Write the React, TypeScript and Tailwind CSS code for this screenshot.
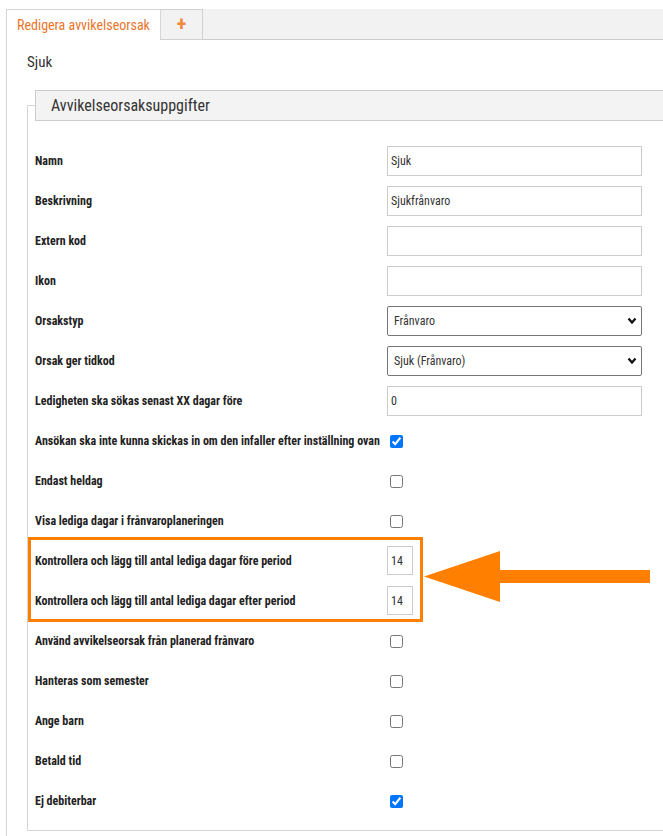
import React from 'react';

type Row =
    | { label: string; kind: 'text'; value?: string }
    | { label: string; kind: 'select'; value: string }
    | { label: string; kind: 'check'; checked?: boolean }
    | { label: string; kind: 'small'; value: string };

const topRows: Row[] = [
    { label: 'Namn', kind: 'text', value: 'Sjuk' },
    { label: 'Beskrivning', kind: 'text', value: 'Sjukfrånvaro' },
    { label: 'Extern kod', kind: 'text' },
    { label: 'Ikon', kind: 'text' },
    { label: 'Orsakstyp', kind: 'select', value: 'Frånvaro' },
    { label: 'Orsak ger tidkod', kind: 'select', value: 'Sjuk (Frånvaro)' },
    { label: 'Ledigheten ska sökas senast XX dagar före', kind: 'text', value: '0' },
    { label: 'Ansökan ska inte kunna skickas in om den infaller efter inställning ovan', kind: 'check', checked: true },
    { label: 'Endast heldag', kind: 'check' },
    { label: 'Visa lediga dagar i frånvaroplaneringen', kind: 'check' },
];

const highlightedRows: Row[] = [
    { label: 'Kontrollera och lägg till antal lediga dagar före period', kind: 'small', value: '14' },
    { label: 'Kontrollera och lägg till antal lediga dagar efter period', kind: 'small', value: '14' },
];

const bottomRows: Row[] = [
    { label: 'Använd avvikelseorsak från planerad frånvaro', kind: 'check' },
    { label: 'Hanteras som semester', kind: 'check' },
    { label: 'Ange barn', kind: 'check' },
    { label: 'Betald tid', kind: 'check' },
    { label: 'Ej debiterbar', kind: 'check', checked: true },
];

const condensed = {
    fontFamily: '"Roboto Condensed", "Liberation Sans Narrow", "DejaVu Sans Condensed", Roboto, sans-serif',
};

function Control({ row }: { row: Row }) {
    if (row.kind === 'text') {
        return (
            <input
                type="text"
                defaultValue={row.value ?? ''}
                style={condensed}
                className="h-[30px] w-[255px] border border-[#cccccc] bg-white px-[3px] text-[12px] text-[#333333] outline-none"
            />
        );
    }
    if (row.kind === 'select') {
        return (
            <div className="relative h-[30px] w-[255px]">
                <select
                    defaultValue={row.value}
                    style={condensed}
                    className="h-full w-full appearance-none rounded-[2px] border border-[#767676] bg-white pl-[6px] text-[12px] text-[#333333] outline-none"
                >
                    <option value={row.value}>{row.value}</option>
                </select>
                <svg className="pointer-events-none absolute right-[5px] top-[11px] h-[8px] w-[10px]" viewBox="0 0 10 8">
                    <path d="M1.5 1.5 L5 5.5 L8.5 1.5" fill="none" stroke="#111111" strokeWidth={2.2} />
                </svg>
            </div>
        );
    }
    if (row.kind === 'small') {
        return (
            <input
                type="text"
                defaultValue={row.value}
                style={condensed}
                className="h-[29px] w-[26px] border border-[#cccccc] bg-white px-[3px] text-[12px] text-[#333333] outline-none"
            />
        );
    }
    return (
        <input
            type="checkbox"
            defaultChecked={row.checked}
            className="m-0 ml-[3px] mt-[2px] h-[13px] w-[13px]"
        />
    );
}

function FormRow({ row }: { row: Row }) {
    return (
        <div className="flex h-[40px] items-center">
            <div className="w-[352px] shrink-0 text-[12px] font-bold text-[#222222]">{row.label}</div>
            <Control row={row} />
        </div>
    );
}

export default function App() {
    return (
        <div
            className="h-[836px] w-[663px] overflow-hidden bg-white pt-[9px] text-[#333333]"
            style={condensed}
        >
            <div className="ml-[6px] flex h-[31px]">
                <div className="flex w-[155px] items-center border-l border-r border-t border-[#d6d6d6] bg-white pl-[10px] text-[14px] text-[#e8762c]">
                    Redigera avvikelseorsak
                </div>
                <div className="flex w-[42px] items-center justify-center border-b border-r border-t border-[#d0d0d0] bg-[#f2f2f2] pb-[2px] text-[20px] font-bold text-[#f08a3c]">
                    +
                </div>
                <div className="flex-1 border-b border-[#cccccc] bg-[#f2f2f2]" />
            </div>

            <div className="ml-[6px] h-[800px] border-l border-[#d6d6d6] pl-[20px]">
                <div className="pt-[11px] text-[15px] text-[#333333]">Sjuk</div>

                <fieldset className="mt-[16px] w-[680px] border-b border-l border-t border-[#d6d6d6] px-[7px] pb-[9px]">
                    <legend className="h-[31px] w-[660px] border border-[#cccccc] bg-[#f3f3f3] pl-[15px] text-[16px] leading-[29px] text-[#333333]">
                        Avvikelseorsaksuppgifter
                    </legend>

                    <div className="pt-[20px]">
                        {topRows.map((row) => (
                            <FormRow key={row.label} row={row} />
                        ))}

                        <div className="relative">
                            {highlightedRows.map((row) => (
                                <FormRow key={row.label} row={row} />
                            ))}
                            <div className="pointer-events-none absolute left-[-7px] top-[-4px] h-[85px] w-[395px] border-[3px] border-[#ff8000]" />
                            <svg className="pointer-events-none absolute left-[389px] top-[10px] h-[51px] w-[226px]" viewBox="0 0 226 51">
                                <path d="M0 25.5 L76 0 L76 19 L226 19 L226 32 L76 32 L76 51 Z" fill="#ff8000" />
                            </svg>
                        </div>

                        {bottomRows.map((row) => (
                            <FormRow key={row.label} row={row} />
                        ))}
                    </div>
                </fieldset>
            </div>
        </div>
    );
}
